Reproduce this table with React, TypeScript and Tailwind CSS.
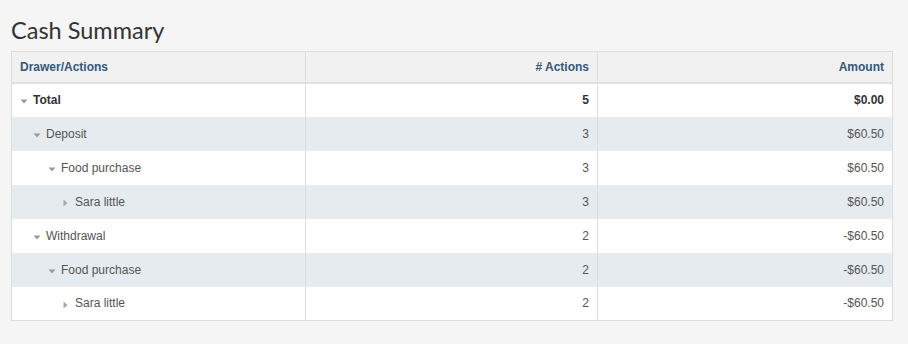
type Row = {
  label: string;
  level: number;
  open: boolean;
  count: string;
  amount: string;
  bold?: boolean;
};

const rows: Row[] = [
  { label: "Total", level: 0, open: true, count: "5", amount: "$0.00", bold: true },
  { label: "Deposit", level: 1, open: true, count: "3", amount: "$60.50" },
  { label: "Food purchase", level: 2, open: true, count: "3", amount: "$60.50" },
  { label: "Sara little", level: 3, open: false, count: "3", amount: "$60.50" },
  { label: "Withdrawal", level: 1, open: true, count: "2", amount: "-$60.50" },
  { label: "Food purchase", level: 2, open: true, count: "2", amount: "-$60.50" },
  { label: "Sara little", level: 3, open: false, count: "2", amount: "-$60.50" },
];

const indent = ["pl-[8px]", "pl-[21px]", "pl-[36px]", "pl-[50px]"];

function Caret({ open }: { open: boolean }) {
  return open ? (
    <svg width="8" height="5" viewBox="0 0 8 5" className="mt-[3px] mr-[5px] shrink-0">
      <path d="M0.5 0.5h7L4 4.5z" fill="#9a9a9a" />
    </svg>
  ) : (
    <svg width="5" height="8" viewBox="0 0 5 8" className="mt-[3px] ml-[1px] mr-[7px] shrink-0">
      <path d="M0.5 0.5v7L4.5 4z" fill="#a8a8a8" />
    </svg>
  );
}

export default function App() {
  return (
    <div className="min-h-screen bg-[#f5f5f5] px-[11px] pt-[14px] pb-6 font-['Liberation_Sans',Arial,sans-serif]">
      <h1 className="font-['Lato',sans-serif] text-[23.5px] leading-[32px] text-[#333] mb-[5px]">
        Cash Summary
      </h1>
      <table className="w-[881px] table-fixed border-collapse text-[12px] bg-white">
        <colgroup>
          <col className="w-[294px]" />
          <col className="w-[292px]" />
          <col className="w-[295px]" />
        </colgroup>
        <thead>
          <tr className="bg-[#f1f1f1] h-[31px]">
            <th className="border border-[#dddddd] border-b-2 border-b-[#e0e0e0] px-[8px] text-left font-bold text-[#34587a]">
              Drawer/Actions
            </th>
            <th className="border border-[#dddddd] border-b-2 border-b-[#e0e0e0] px-[8px] text-right font-bold text-[#34587a]">
              # Actions
            </th>
            <th className="border border-[#dddddd] border-b-2 border-b-[#e0e0e0] px-[8px] text-right font-bold text-[#34587a]">
              Amount
            </th>
          </tr>
        </thead>
        <tbody>
          {rows.map((r, i) => (
            <tr key={i} className={`h-[34px] ${i % 2 === 1 ? "bg-[#e5ebef]" : "bg-white"}`}>
              <td className={`border-l border-r border-[#dddddd] pr-[8px] ${indent[r.level]}`}>
                <div
                  className={`flex items-center ${r.bold ? "font-bold text-[#333]" : "text-[#555]"}`}
                >
                  <Caret open={r.open} />
                  <span>{r.label}</span>
                </div>
              </td>
              <td
                className={`border-l border-r border-[#dddddd] px-[8px] text-right ${r.bold ? "font-bold text-[#333]" : "text-[#555]"}`}
              >
                {r.count}
              </td>
              <td
                className={`border-l border-r border-[#dddddd] px-[8px] text-right ${r.bold ? "font-bold text-[#333]" : "text-[#555]"}`}
              >
                {r.amount}
              </td>
            </tr>
          ))}
          <tr>
            <td colSpan={3} className="h-0 p-0 border-t border-[#dddddd]" />
          </tr>
        </tbody>
      </table>
    </div>
  );
}
